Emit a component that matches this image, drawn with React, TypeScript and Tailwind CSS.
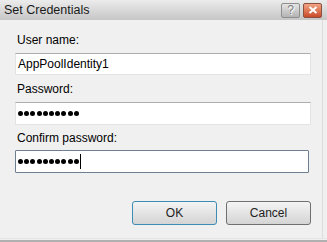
import React from "react";

const font = { fontFamily: '"Liberation Sans", Arial, sans-serif' };

function Dots({ n }: { n: number }) {
  return (
    <div className="flex items-center gap-[1.2px]">
      {Array.from({ length: n }).map((_, i) => (
        <div key={i} className="w-[5px] h-[5px] rounded-full bg-black shrink-0" />
      ))}
    </div>
  );
}

export default function App() {
  return (
    <div className="w-[327px] h-[242px] bg-[#f0f0f0] flex flex-col text-[12px] text-black" style={font}>
      <div className="h-[20px] shrink-0 flex items-center justify-between pl-[4px] pr-[5px] bg-gradient-to-b from-[#ececec] to-[#c6c6c6]">
        <span className="text-[12.5px] text-[#1a1a1a] leading-none">Set Credentials</span>
        <div className="flex gap-[3px] shrink-0">
          <div className="w-[19px] h-[15px] shrink-0 rounded-[2px] border border-[#8e8e8e] bg-gradient-to-b from-[#e4e4e4] to-[#b4b4b4] flex items-center justify-center text-[12px] text-[#777] leading-none" style={{ textShadow: "0 0 1px #fff, 1px 1px 0 #fff" }}>?</div>
          <div className="w-[19px] h-[15px] shrink-0 rounded-[2px] border border-[#8a5040] bg-gradient-to-b from-[#f2a484] to-[#c84a28] flex items-center justify-center">
            <svg width="10" height="8" viewBox="0 0 10 8"><path d="M1.5 1 L8.5 7 M8.5 1 L1.5 7" stroke="white" strokeWidth="2" /></svg>
          </div>
        </div>
      </div>
      <div className="flex-1 flex flex-col pl-[15px] pr-[11px] pt-[12px] border-r border-[#dcdcdc] mr-[4px]">
        <div className="pl-[2px] h-[21px] leading-[16px]">User name:</div>
        <div className="h-[22px] bg-white border border-[#e3e3e3] border-t-[#adadad] flex items-center pl-[2px]">AppPoolIdentity1</div>
        <div className="pl-[2px] h-[27px] pt-[6px] leading-[16px]">Password:</div>
        <div className="h-[23px] bg-white border border-[#e3e3e3] border-t-[#adadad] flex items-center pl-[2px]"><Dots n={10} /></div>
        <div className="pl-[2px] h-[25px] pt-[5px] leading-[16px]">Confirm password:</div>
        <div className="h-[23px] mr-[2px] bg-white border border-[#6f7f90] rounded-[1px] flex items-center pl-[2px]">
          <Dots n={10} />
          <div className="w-[1px] h-[15px] bg-black ml-[1px]" />
        </div>
        <div className="flex justify-end gap-[9px] mt-[28px]">
          <button className="w-[85px] h-[24px] rounded-[3px] border border-[#3c8cb4] bg-gradient-to-b from-[#f4f4f4] to-[#d4d4d4] text-[12px] text-[#222]" style={font}>OK</button>
          <button className="w-[85px] h-[24px] rounded-[3px] border border-[#707070] bg-gradient-to-b from-[#f4f4f4] to-[#d4d4d4] text-[12px] text-[#222]" style={font}>Cancel</button>
        </div>
      </div>
      <div className="h-[4px] shrink-0 border-t border-[#e4e4e4] border-b-2 border-b-[#b0b0b0]" />
    </div>
  );
}
